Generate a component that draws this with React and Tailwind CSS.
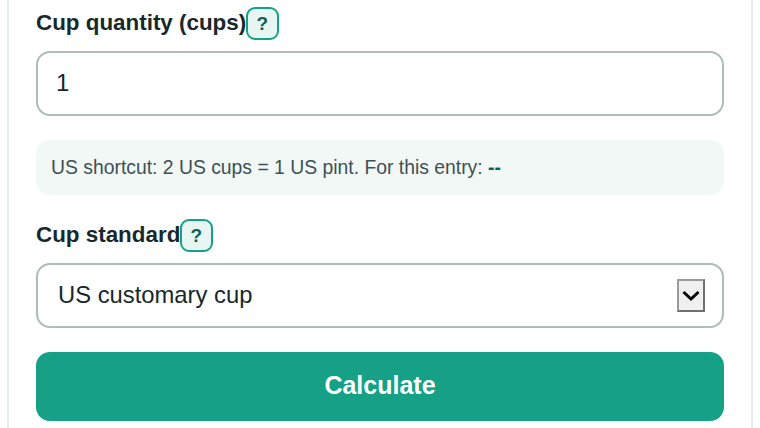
import { useState } from "react";

function HelpBadge() {
  return (
    <button className="flex h-[33px] w-[33px] items-center justify-center rounded-[9px] border-2 border-[#16a085] bg-[#e8f6f3] pr-[1px] pt-[1px] text-[19px] font-bold text-[#0f5f52]">
      ?
    </button>
  );
}

export default function App() {
  const [cups, setCups] = useState("1");

  return (
    <div className="h-[428px] w-[760px] overflow-hidden bg-white px-[7px] font-['Liberation_Sans',Arial,sans-serif]">
      <div className="flex h-full flex-col border-x-2 border-[#e6eeeb] px-[27px] pt-[7px]">
        <div className="flex h-[33px] items-center text-[22.4px] font-bold text-[#17282b]">
          <span className="-mt-[2px]">Cup quantity (cups)</span>
          <HelpBadge />
        </div>
        <input
          value={cups}
          onChange={(e) => setCups(e.target.value)}
          className="mt-[11px] h-[65px] w-full rounded-[14px] border-2 border-[#adbdb8] bg-white px-[18px] pb-[1px] text-[24px] text-[#17282b] outline-none"
        />
        <div className="mt-[24px] flex h-[55px] items-center rounded-[14px] bg-[#f2f8f6] px-[15px] text-[19.35px] text-[#3c5153]">
          <span>
            US shortcut: 2 US cups = 1 US pint. For this entry:{" "}
            <strong className="text-[#0f5f52]">--</strong>
          </span>
        </div>
        <div className="mt-[24px] flex h-[33px] items-center text-[22.4px] font-bold text-[#17282b]">
          <span className="-mt-[2px]">Cup standard</span>
          <HelpBadge />
        </div>
        <div className="mt-[11px] flex h-[65px] items-center justify-between rounded-[14px] border-2 border-[#adbdb8] bg-white pl-[20px] pr-[17px] text-[23.8px] text-[#17282b]">
          <span className="-mt-[2px]">US customary cup</span>
          <div className="flex h-[33px] w-[28px] items-center justify-center border-2 border-t-[#9a9a9a] border-l-[#9a9a9a] border-r-[#707070] border-b-[#707070] bg-[#f0f0f0]">
            <svg width="18" height="12" viewBox="0 0 18 12" fill="none">
              <path d="M1.5 2 L9 9 L16.5 2" stroke="#000" strokeWidth="3" />
            </svg>
          </div>
        </div>
        <button className="mt-[24px] h-[69px] w-full rounded-[14px] bg-[#16a085] pb-[2px] text-[25px] font-bold text-white">
          Calculate
        </button>
      </div>
    </div>
  );
}
